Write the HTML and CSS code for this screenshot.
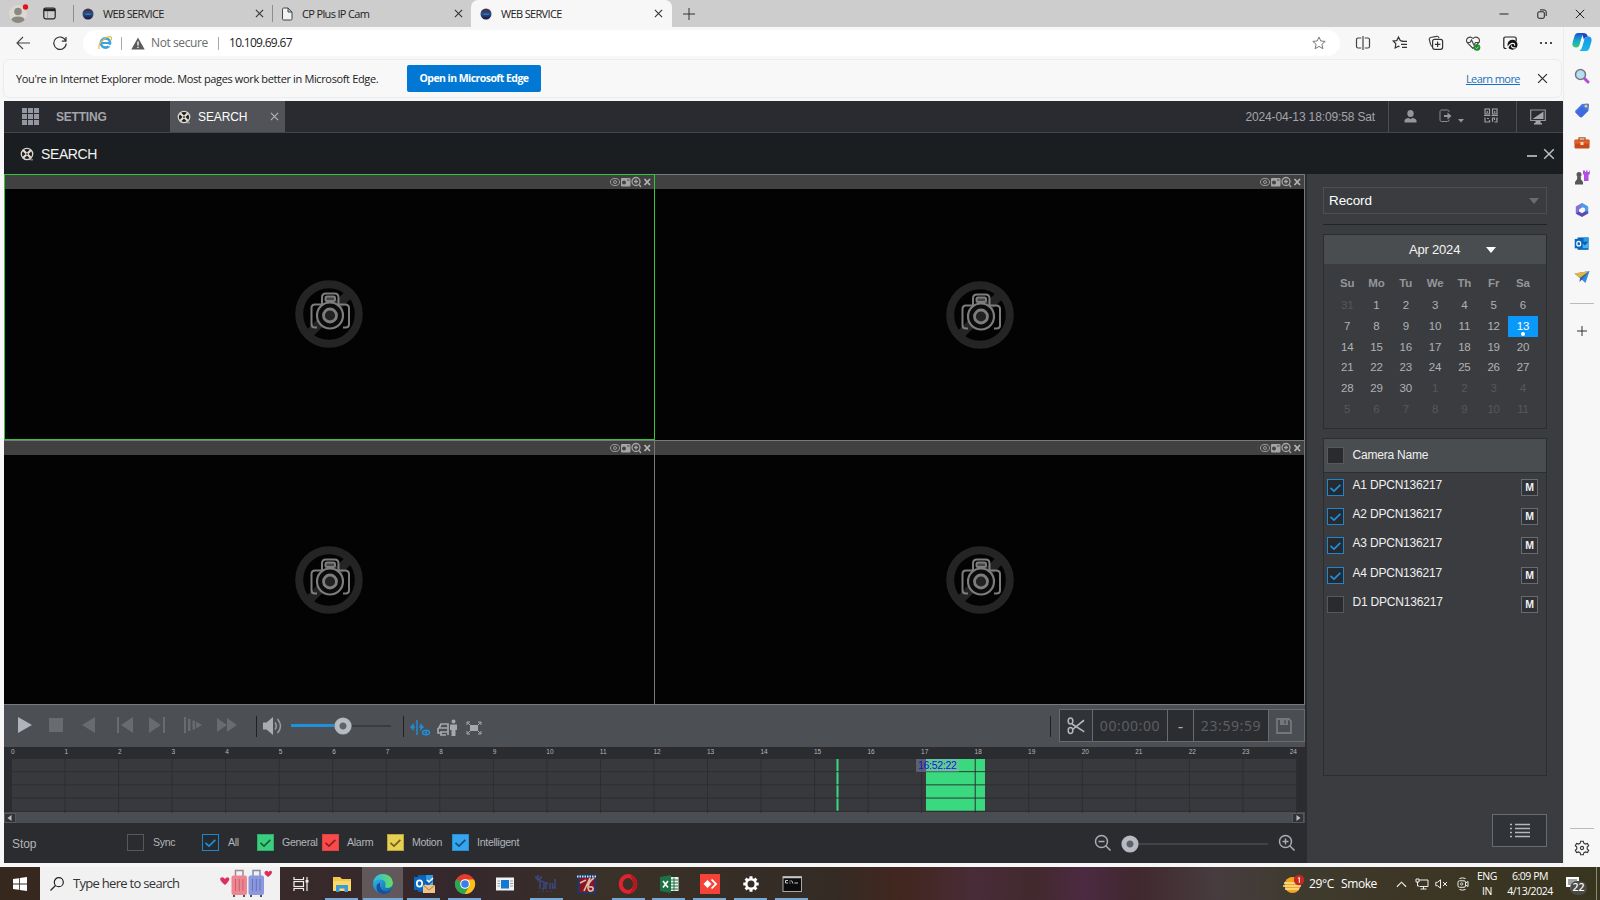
FILE: index.html
```html
<!DOCTYPE html>
<html lang="en">
<head>
<meta charset="utf-8">
<title>WEB SERVICE</title>
<link rel="stylesheet" href="styles.css">
</head>
<body>
<svg class="defs" width="0" height="0" aria-hidden="true">
  <defs>
    <linearGradient id="gFav" x1="0" y1="0" x2="0" y2="1"><stop offset="0" stop-color="#4a2a38"/><stop offset=".5" stop-color="#24508c"/><stop offset="1" stop-color="#1a1238"/></linearGradient>
    <linearGradient id="gEdge" x1="0" y1="0" x2="1" y2="1"><stop offset="0" stop-color="#35c1f1"/><stop offset="1" stop-color="#0c59a4"/></linearGradient>
    <linearGradient id="gEdge2" x1="0" y1="0" x2="1" y2="0"><stop offset="0" stop-color="#2bb9e8"/><stop offset="1" stop-color="#6bdc5b"/></linearGradient>
    <linearGradient id="gCop1" x1="0" y1="0" x2="0" y2="1"><stop offset="0" stop-color="#1b4fd0"/><stop offset=".5" stop-color="#13a9c9"/><stop offset="1" stop-color="#39c978"/></linearGradient>
    <linearGradient id="gCop2" x1="0" y1="0" x2="0" y2="1"><stop offset="0" stop-color="#1597e5"/><stop offset="1" stop-color="#18b6ea"/></linearGradient>
    <radialGradient id="gKnob"><stop offset="0" stop-color="#5f646c"/><stop offset=".36" stop-color="#5f646c"/><stop offset=".46" stop-color="#b9bdc4"/><stop offset="1" stop-color="#b4b8be"/></radialGradient>
    <symbol id="fav" viewBox="0 0 12 12"><circle cx="6" cy="6" r="5.500" fill="url(#gFav)"/><path d="M2 6Q6 4.800 10 6Q6 8 2 6Z" fill="#3f78b8"/></symbol>
    <symbol id="x" viewBox="0 0 10 10"><path d="M1 1L9 9M9 1L1 9" fill="none" stroke="currentColor" stroke-width="1.200"/></symbol>
    <symbol id="reel" viewBox="0 0 14 14"><circle cx="7" cy="7" r="5.700" fill="#1d1b1c" stroke="#dad6d0" stroke-width="1.300"/><path d="M3.200 3.200L10.800 10.800M10.800 3.200L3.200 10.800" stroke="#e0dcd4" stroke-width="2.200"/><circle cx="7" cy="7" r="1" fill="#4a4340"/><path d="M10 12.800h3" stroke="#a9a59f"/></symbol>
    <symbol id="tools" viewBox="0 0 42 12"><g fill="none" stroke="#9b9b9b"><ellipse cx="5" cy="6" rx="4.500" ry="3.500"/><circle cx="5" cy="6" r="1.500"/></g><rect x="11" y="2" width="9.500" height="8.500" rx="1" fill="#a5a5a5"/><circle cx="14" cy="6.500" r="2" fill="#444"/><path d="M17 4h2.500" stroke="#444"/><g fill="none" stroke="#a5a5a5" stroke-width="1.300"><circle cx="26" cy="5.500" r="4"/><path d="M24 5.500h4M26 3.500v4M29 8.500L31 11"/></g><path d="M34.500 3L40 9M40 3L34.500 9" stroke="#b5b5b5" stroke-width="1.700"/></symbol>
    <symbol id="nocam" viewBox="0 0 68 68"><circle cx="34" cy="34" r="29.800" fill="none" stroke="#242424" stroke-width="8"/><path d="M14 54L54 14" stroke="#242424" stroke-width="9"/><g fill="none" stroke="#7d7d7d" stroke-width="2"><path d="M22 47.500H20Q16.500 47.500 16.500 44.500V28Q16.500 24.500 20 24.500H27V17.500Q27 13.500 31 13.500H39.500Q43.500 13.500 43.500 17.500V24.500H50Q54 24.500 54 28V44.500Q54 47.500 50.500 47.500H48"/><circle cx="35" cy="35.500" r="13" fill="#0b0b0b" stroke-width="2.200"/><circle cx="35" cy="35.500" r="6.500" fill="#222" stroke-width="2.800"/><rect x="30.500" y="16.500" width="9.500" height="4.500" rx="1.500" fill="#444"/></g></symbol>
    <symbol id="tick" viewBox="0 0 17 17"><path d="M2.800 8.800L6.800 12.500L14 5.500" fill="none" stroke="currentColor" stroke-width="1.900"/></symbol>
    <symbol id="knob" viewBox="0 0 18 18"><circle cx="9" cy="9" r="8.600" fill="url(#gKnob)"/></symbol>
    <symbol id="ofav" viewBox="0 0 22 22"><rect x="5" y="2" width="15" height="17" fill="#0a5fb4"/><path d="M9 8L15 13L20 8V17H9Z" fill="#45b3f0"/><path d="M13 2H20V8H13Z" fill="#2b9ae6"/><rect x="1" y="4" width="11" height="13" fill="#0869c2"/><ellipse cx="6.500" cy="10.500" rx="2.700" ry="3.200" fill="none" stroke="#fff" stroke-width="1.700"/></symbol>
  </defs>
</svg>

<div class="tabbar">
  <svg class="avatar" viewBox="0 0 20 20"><circle cx="9" cy="10" r="9" fill="#dbd8d3"/><circle cx="9" cy="7.500" r="3.800" fill="#8b8884"/><path d="M2.500 16Q2.500 12.500 9 12.500T15.500 16Q13 19 9 19T2.500 16Z" fill="#8b8884"/><circle cx="16.500" cy="3" r="2.700" fill="#e3131b"/></svg>
  <svg class="tabact" viewBox="0 0 13 13"><rect x=".8" y="1" width="11.400" height="10.800" rx="1.800" fill="none" stroke="#222" stroke-width="1.200"/><path d="M1 1.500h11v2.700H1z" fill="#222"/><path d="M4.500 4v7.500" stroke="#777" stroke-width=".6"/></svg>
  <div class="tab t1"><svg class="fi"><use href="#fav"/></svg><span class="tw">WEB SERVICE</span><svg class="cx"><use href="#x"/></svg></div>
  <div class="tab t2"><svg class="fi doc" viewBox="0 0 12 14"><path d="M1.500 2.200Q1.500 1 2.700 1H7L11 5V11.800Q11 13 9.800 13H2.700Q1.500 13 1.500 11.800ZM7 1V5H11" fill="#f2f2f2" stroke="#444"/></svg><span class="tw2">CP Plus IP Cam</span><svg class="cx"><use href="#x"/></svg></div>
  <div class="tab t3"><svg class="fi"><use href="#fav"/></svg><span class="tw">WEB SERVICE</span><svg class="cx"><use href="#x"/></svg></div>
  <svg class="plus" viewBox="0 0 12 12"><path d="M6 0V12M0 6H12" stroke="#333"/></svg>
  <div class="winbtns">
    <svg viewBox="0 0 10 10"><path d="M.5 5h9" stroke="#222"/></svg>
    <svg viewBox="0 0 10 10"><path d="M3 .9H7Q9.200 .9 9.200 3V7" fill="none" stroke="#222"/><rect x=".8" y="2.800" width="6.500" height="6.500" rx="1.200" fill="none" stroke="#222"/></svg>
    <svg viewBox="0 0 10 10"><path d="M.8 .8L9.200 9.200M9.200 .8L.8 9.200" stroke="#222"/></svg>
  </div>
</div>

<div class="edge">
  <div class="edgemain">
    <div class="toolbar">
      <svg class="back" viewBox="0 0 14 14"><path d="M14 7H1M7 1L1 7L7 13" fill="none" stroke="#444" stroke-width="1.100"/></svg>
      <svg class="reload" viewBox="0 0 14 14"><path d="M12.800 5A6.200 6.200 0 1 0 13.200 7.500M13 1V5.200H8.800" fill="none" stroke="#333" stroke-width="1.200"/></svg>
      <div class="addr">
        <svg class="ie" viewBox="0 0 14 14"><circle cx="7.500" cy="7" r="4.600" fill="none" stroke="#38a3e0" stroke-width="2.600"/><path d="M3.500 7H12.500" stroke="#38a3e0" stroke-width="2"/><path d="M10 9.500H14" stroke="#fff" stroke-width="1.500"/><path d="M1.200 13Q-.5 9 5 4T13.500 1.500Q14 3 12.500 4.500" fill="none" stroke="#e8bd3e" stroke-width="1.200"/></svg>
        <i class="sep s1"></i>
        <svg class="warn" viewBox="0 0 14 13"><path d="M7 .5L13.700 12.500H.3Z" fill="#5c5c5c"/><path d="M7 4.500V8.500M7 9.700V11" stroke="#fff" stroke-width="1.300"/></svg>
        <span class="nsec">Not secure</span>
        <i class="sep s2"></i>
        <span class="url">10.109.69.67</span>
        <svg class="star" viewBox="0 0 14 14"><path d="M7 1L8.800 5L13.200 5.400L9.900 8.300L10.900 12.700L7 10.400L3.100 12.700L4.100 8.300L.8 5.400L5.200 5Z" fill="none" stroke="#777"/></svg>
      </div>
      <div class="tbicons">
        <svg viewBox="0 0 16 16"><path d="M6.300 3H3.200Q1.500 3 1.500 4.500V11.500Q1.500 13 3.200 13H6.300M9.700 3H12.800Q14.500 3 14.500 4.500V11.500Q14.500 13 12.800 13H9.700M8 1V15" fill="none" stroke="#444" stroke-width="1.200"/></svg>
        <svg viewBox="0 0 16 16"><path d="M10.500 5.800L8.300 5.600L6.500 2L4.800 5.600L1.200 6L3.800 8.800L3.200 13L6.500 11.200L7.500 11.800M9.500 6.300H15M9 9.300H15M10 12.300H15" fill="none" stroke="#333" stroke-width="1.200"/></svg>
        <svg viewBox="0 0 16 16"><path d="M4 11.500Q2.800 10.500 2.500 9L1.300 4.500Q1 3 2.500 2.500L8.500 1.300Q10.500 1 11 3" fill="none" stroke="#444" stroke-width="1.200"/><rect x="4.600" y="4.300" width="10" height="10" rx="2" fill="none" stroke="#333" stroke-width="1.200"/><path d="M9.600 6.500V12M6.900 9.300H12.400" stroke="#333" stroke-width="1.200"/></svg>
        <svg viewBox="0 0 16 16"><path d="M8 13.500L2.500 8Q.5 5.500 2.500 3.200Q5.500 .8 8 3.500Q10.500 .8 13.500 3.200Q15.500 5.500 13.500 8ZM1.500 7.500H5L6.500 5L9 10L10.500 7.500H14.500" fill="none" stroke="#444" stroke-width="1.100"/><circle cx="12" cy="12.500" r="3.300" fill="#1d8a2c"/><path d="M10.500 12.500L11.700 13.700L13.700 11.500" fill="none" stroke="#d8f0d8" stroke-width=".8"/></svg>
        <svg viewBox="0 0 16 16"><path d="M4.500 13.500H3.500Q1.800 13.500 1.800 11.800V3.700Q1.800 2 3.500 2H12.500Q14.200 2 14.200 3.700V6" fill="none" stroke="#222" stroke-width="1.200"/><circle cx="10.500" cy="9.800" r="5" fill="#111"/><path d="M6 12.500Q8 7.500 12 8.500Q13.200 9.500 12.500 10.800M9.500 10.500Q9 13.200 14 13" fill="none" stroke="#f7f7f7" stroke-width="1.100"/></svg>
        <svg viewBox="0 0 16 16"><g fill="#222"><circle cx="3" cy="8" r="1.100"/><circle cx="8" cy="8" r="1.100"/><circle cx="13" cy="8" r="1.100"/></g></svg>
      </div>
    </div>
    <div class="infobar">
      <span class="imsg">You're in Internet Explorer mode. Most pages work better in Microsoft Edge.</span>
      <span class="obtn"><b>Open in Microsoft Edge</b></span>
      <span class="learn">Learn more</span>
      <svg class="ix"><use href="#x"/></svg>
    </div>

    <div class="app">
      <div class="nav">
        <svg class="gridi" viewBox="0 0 17 17"><path d="M0 0h5v5H0zM6 0h5v5H6zM12 0h5v5h-5zM0 6h5v5H0zM6 6h5v5H6zM12 6h5v5h-5zM0 12h5v5H0zM6 12h5v5H6zM12 12h5v5h-5z" fill="#9496a0"/></svg>
        <b class="setting">SETTING</b>
        <div class="navtab"><svg class="reel"><use href="#reel"/></svg><span>SEARCH</span><svg class="nx"><use href="#x"/></svg></div>
        <span class="date">2024-04-13 18:09:58 Sat</span>
        <div class="navicons">
          <svg class="person" viewBox="0 0 13 13"><ellipse cx="6.500" cy="3.500" rx="3.200" ry="3.500" fill="#94969c"/><path d="M.5 12.500V10.500Q1 8.500 4.500 8L6.500 9L8.500 8Q12 8.500 12.500 10.500V12.500Z" fill="#94969c"/></svg>
          <svg class="exit" viewBox="0 0 26 14"><path d="M10 3V2.500Q10 1 8.500 1H2.500Q1 1 1 2.500V11Q1 12.500 2.500 12.500H8.500Q10 12.500 10 11V10.500" fill="none" stroke="#8a8c92"/><path d="M5 6H8.500V3.500L12.500 7L8.500 10.500V8H5Z" fill="#94969c"/><path d="M19 10H25L22 13.500Z" fill="#94969c"/></svg>
          <svg class="qr" viewBox="0 0 14 15"><g fill="none" stroke="#9a9ca2" stroke-width="1.200"><rect x="1" y="1" width="4.500" height="5"/><rect x="8.500" y="1" width="4.500" height="5"/><path d="M3.200 3v2M10.700 3v2M0 7.500H6.500M7.500 7.500H14M1 9.500V14H5.500V12M3 10.500H5M8.500 14V10H10.500V12M13 9.500V14H10.500M12 11H13"/></g></svg>
        </div>
        <svg class="mon" viewBox="0 0 16 16"><path d="M.7 1H15.300V11.500H.7Z" fill="none" stroke="#94969c" stroke-width="1.200"/><path d="M13.500 2.500V10H2.500ZM5.500 12H10.500V14H12V15.500H4V14H5.500Z" fill="#a3a5aa"/></svg>
      </div>
      <div class="title"><svg class="reel"><use href="#reel"/></svg><span>SEARCH</span><i class="mini"></i><svg class="tx"><use href="#x"/></svg></div>

      <div class="body">
        <div class="left">
          <div class="videos">
            <div class="cell sel"><div class="chead"><svg><use href="#tools"/></svg></div><div class="cbody"><svg><use href="#nocam"/></svg></div></div>
            <div class="cell"><div class="chead"><svg><use href="#tools"/></svg></div><div class="cbody"><svg><use href="#nocam"/></svg></div></div>
            <div class="cell"><div class="chead"><svg><use href="#tools"/></svg></div><div class="cbody"><svg><use href="#nocam"/></svg></div></div>
            <div class="cell"><div class="chead"><svg><use href="#tools"/></svg></div><div class="cbody"><svg><use href="#nocam"/></svg></div></div>
          </div>
          <div class="controls">
            <svg class="play" viewBox="0 0 226 20"><path d="M4 2V18L18 10Z" fill="#b0b3b9"/><g fill="#686b70"><path d="M35 3h14v14H35zM81 2V18L68 10ZM103 2h2V18h-2zM119 2V18L107 10ZM135 2V18L147 10ZM149 2h2V18h-2zM170 2h2V18h-2zM174 4h2.500V16H174zM178.500 5.500h2.500V14.500h-2.500zM182 6.500L188 10L182 13.500ZM203 3V17L213 10ZM213 3V17L223 10Z"/></g></svg>
            <i class="vsep"></i>
            <svg class="spk" viewBox="0 0 22 20"><path d="M1 6.500H4.500L11 1V19L4.500 13.500H1Z" fill="#a9acb1"/><path d="M13 6.500Q15.500 10 13 13.500M15.500 3Q21.500 10 15.500 17" fill="none" stroke="#9a9da2" stroke-width="1.500"/></svg>
            <div class="vol"><i class="fill"></i><svg class="knob"><use href="#knob"/></svg><i class="rest"></i></div>
            <i class="vsep"></i>
            <svg class="trio" viewBox="0 0 74 18"><g fill="none" stroke="#1f90dc" stroke-width="1.400"><path d="M7 1V16M1 8H5M9 8H13M4 5L1 8L4 11M10 5L13 8L10 11"/><ellipse cx="16" cy="13.500" rx="3.500" ry="2.300" fill="#4c4f53"/></g><circle cx="16" cy="13.500" r="1.200" fill="#1f90dc"/><path d="M29 9L31 5H38V16M28 9H37M30 13H37M28 9V14H31V16H36" fill="none" stroke="#a5a8ad" stroke-width="1.700"/><circle cx="43.500" cy="2.500" r="2" fill="#a5a8ad"/><path d="M40 5.500H47V11H45.500V17H41.500V11H40Z" fill="#a5a8ad"/><path d="M57 6V3H60M68 3H71V6M57 12V15H60M68 15H71V12M57 3L60 6M71 3L68 6M57 15L60 12M71 15L68 12" fill="none" stroke="#a5a8ad"/><rect x="60" y="6" width="8" height="6" fill="#a5a8ad"/></svg>
            <i class="vsep far"></i>
            <div class="clip">
              <div class="cl sc"><svg viewBox="0 0 18 18"><g fill="none" stroke="#b4b7bc" stroke-width="1.500"><ellipse cx="3.500" cy="4" rx="2.300" ry="3"/><ellipse cx="3.500" cy="13.500" rx="2.300" ry="3"/></g><path d="M5 6L17.500 14L17 15.500L5 8ZM5 12L16.500 2.500L17.500 4L6 13Z" fill="#b4b7bc"/></svg></div>
              <div class="cl tm">00:00:00</div><div class="cl ds">-</div><div class="cl tm">23:59:59</div>
              <div class="cl sv"><svg viewBox="0 0 16 16"><path d="M1 1H13L15 3V15H1Z" fill="none" stroke="#74777c" stroke-width="1.800"/><path d="M4 1H12V7H4Z" fill="#74777c"/><path d="M9 2.200v3.500" stroke="#4c4f53" stroke-width="1.500"/></svg></div>
            </div>
          </div>
          <div class="timeline">
            <div class="ruler"><span>0</span><span>1</span><span>2</span><span>3</span><span>4</span><span>5</span><span>6</span><span>7</span><span>8</span><span>9</span><span>10</span><span>11</span><span>12</span><span>13</span><span>14</span><span>15</span><span>16</span><span>17</span><span>18</span><span>19</span><span>20</span><span>21</span><span>22</span><span>23</span><span class="last">24</span></div>
            <svg class="track" viewBox="0 0 1285 54"><defs><pattern id="tg" width="53.540" height="13.170" patternUnits="userSpaceOnUse"><path d="M53 0V13.170M0 12.700H53.540" stroke="#2a2c2f" stroke-width="1"/></pattern></defs><rect width="1285" height="53" fill="#37393d"/><path d="M824.500 0h2v52h-2zM914 0h59v52h-59z" fill="#3bd97f"/><rect width="1285" height="54" fill="url(#tg)"/></svg>
            <span class="stamp">16:52:22</span>
          </div>
          <div class="scroll"><svg viewBox="0 0 12 10"><rect x=".5" y=".5" width="11" height="9" fill="#303338" stroke="#55585c"/><path d="M7.500 2V8L3.500 5Z" fill="#b9bcc0"/></svg><svg class="rt" viewBox="0 0 12 10"><rect x=".5" y=".5" width="11" height="9" fill="#303338" stroke="#55585c"/><path d="M4.500 2V8L8.500 5Z" fill="#b9bcc0"/></svg></div>
          <div class="legend">
            <span class="stop">Stop</span>
            <div class="lg sy"><i class="cb off"></i><span>Sync</span></div>
            <div class="lg al"><svg class="cb blue"><use href="#tick"/></svg><span>All</span></div>
            <div class="lg"><svg class="cb green"><use href="#tick"/></svg><span>General</span></div>
            <div class="lg"><svg class="cb red"><use href="#tick"/></svg><span>Alarm</span></div>
            <div class="lg"><svg class="cb yel"><use href="#tick"/></svg><span>Motion</span></div>
            <div class="lg"><svg class="cb sky"><use href="#tick"/></svg><span>Intelligent</span></div>
            <div class="zoomer">
              <svg class="zi" viewBox="0 0 18 18"><g fill="none" stroke="#a9acb1" stroke-width="1.500"><circle cx="7.500" cy="7.500" r="6"/><path d="M4.500 7.500H10.500M12 12L16.500 16.500"/></g></svg>
              <svg class="knob"><use href="#knob"/></svg><i class="zl"></i>
              <svg class="zi" viewBox="0 0 18 18"><g fill="none" stroke="#a9acb1" stroke-width="1.500"><circle cx="7.500" cy="7.500" r="6"/><path d="M4.500 7.500H10.500M7.500 4.500V10.500M12 12L16.500 16.500"/></g></svg>
            </div>
          </div>
        </div>
        <div class="side">
          <div class="record"><span>Record</span><svg viewBox="0 0 10 6"><path d="M0 0H10L5 6Z" fill="#686b70"/></svg></div>
          <i class="rule"></i>
          <div class="cal">
            <div class="calhead"><span>Apr 2024</span><svg viewBox="0 0 10 6"><path d="M0 0H10L5 6Z" fill="#fff"/></svg></div>
            <div class="days">
              <b>Su</b><b>Mo</b><b>Tu</b><b>We</b><b>Th</b><b>Fr</b><b>Sa</b>
              <i>31</i><span>1</span><span>2</span><span>3</span><span>4</span><span>5</span><span>6</span>
              <span>7</span><span>8</span><span>9</span><span>10</span><span>11</span><span>12</span><span class="today">13</span>
              <span>14</span><span>15</span><span>16</span><span>17</span><span>18</span><span>19</span><span>20</span>
              <span>21</span><span>22</span><span>23</span><span>24</span><span>25</span><span>26</span><span>27</span>
              <span>28</span><span>29</span><span>30</span><i>1</i><i>2</i><i>3</i><i>4</i>
              <i>5</i><i>6</i><i>7</i><i>8</i><i>9</i><i>10</i><i>11</i>
            </div>
          </div>
          <div class="cams">
            <div class="camhead"><i class="cb dark"></i><span>Camera Name</span></div>
            <div class="cam"><svg class="cb blue"><use href="#tick"/></svg><span>A1 DPCN136217</span><b>M</b></div>
            <div class="cam"><svg class="cb blue"><use href="#tick"/></svg><span>A2 DPCN136217</span><b>M</b></div>
            <div class="cam"><svg class="cb blue"><use href="#tick"/></svg><span>A3 DPCN136217</span><b>M</b></div>
            <div class="cam"><svg class="cb blue"><use href="#tick"/></svg><span>A4 DPCN136217</span><b>M</b></div>
            <div class="cam"><i class="cb dark"></i><span>D1 DPCN136217</span><b>M</b></div>
          </div>
          <div class="listbtn"><svg viewBox="0 0 20 16"><path d="M0 1.500H2M0 5.500H2M0 9.500H2M0 13.500H2M5 1.500H20M5 5.500H20M5 9.500H20M5 13.500H20" stroke="#b4b7bb" stroke-width="1.300"/></svg></div>
        </div>
      </div>
    </div>
  </div>

  <div class="sidebar">
    <svg class="cop" viewBox="0 0 20 20"><path d="M6 1H12.500Q10.500 2 9.500 6L7.500 13Q6.500 16 3.500 15.500Q-.5 15 .7 10L2.500 4Q3.500 1 6 1Z" fill="url(#gCop1)"/><path d="M14 19H7.500Q9.500 18 10.500 14L12.500 7Q13.500 4.500 16.500 4.500Q20.500 5 19.300 10L17.500 16Q16.500 19 14 19Z" fill="url(#gCop2)"/><path d="M10 1.200H13Q15 1.500 16 4.800Q13 4.500 12 8Z" fill="#1c45c8"/></svg>
    <svg viewBox="0 0 16 16"><path d="M10 10L14 14" stroke="#b44be0" stroke-width="3" stroke-linecap="round"/><circle cx="6.500" cy="6.500" r="5" fill="#b9dcf3" stroke="#75797f" stroke-width="1.500"/></svg>
    <svg viewBox="0 0 16 16"><path d="M8 2L14 1.500Q15 1.500 15 3L14.500 8.500L8 15Q7 15.500 6 15L1.500 10.500Q.8 9.500 1.500 8.500Z" fill="#4b79e8"/><path d="M1.500 10.500L8 4L14 9L8 15Q7 15.500 6 15Z" fill="#416ade"/><circle cx="12" cy="4.200" r="1.400" fill="#f3d24d"/></svg>
    <svg viewBox="0 0 16 16"><path d="M5 5V2.800H11V5" fill="none" stroke="#a65b2a" stroke-width="1.300"/><rect x=".5" y="4.500" width="15" height="9" rx="1" fill="#c64a1c"/><path d="M.5 5.500h15V8.500H.5z" fill="#e0632a"/><rect x="6.500" y="7" width="3" height="3" fill="#f4d7c0"/></svg>
    <svg viewBox="0 0 16 16"><path d="M9 1.500H11V3H12V1.500H13.500V3H15V1.500H15.800V5L14.500 6V12H10V6L9 5Z" fill="#b050e0"/><circle cx="5" cy="5.500" r="2.500" fill="#55575a"/><path d="M3 7.500H7L6.800 10L9 13V15.500H1V13L3.200 10Z" fill="#55575a"/></svg>
    <svg viewBox="0 0 16 16"><path d="M8 1L1.800 4.500V11.500L5 13.500V7.500L8 5.500L13 4Z" fill="#8a6ddc"/><path d="M8 1L14.200 4.500V11L11 9.500V6.500L8 4.800L5 6.500Z" fill="#4a9fe6"/><path d="M1.800 11.500L8 15L14.200 11.500V9.500L11 9.200L8 11.200L5 9.500Z" fill="#5b4bb5"/></svg>
    <svg viewBox="0 0 22 22"><use href="#ofav"/></svg>
    <svg viewBox="0 0 16 16"><path d="M.5 4.500L15.500 2L11.500 14L7.500 10.500Z" fill="#2f8de0"/><path d="M.5 4.500L15.500 2L6 9Z" fill="#e7b23c"/><path d="M6 9L15.500 2L8 10.500L5.500 13Z" fill="#3a5d9c"/></svg>
    <i class="hr"></i>
    <svg class="sp" viewBox="0 0 10 10"><path d="M5 0V10M0 5H10" stroke="#333"/></svg>
    <i class="hr low"></i>
    <svg class="sg" viewBox="0 0 16 16"><path d="M6.700 1.200h2.600l.5 2 1.600.9 2-.7 1.300 2.300-1.500 1.400v1.800l1.500 1.400-1.300 2.300-2-.7-1.600.9-.5 2H6.700l-.5-2-1.600-.9-2 .7-1.300-2.300 1.500-1.400V7.100L1.300 5.700l1.300-2.300 2 .7 1.600-.9Z" fill="none" stroke="#333" stroke-width="1.100"/><circle cx="8" cy="8" r="1.600" fill="none" stroke="#333" stroke-width="1.100"/></svg>
  </div>
</div>

<div class="taskbar">
  <div class="start"><svg viewBox="0 0 14 14"><path d="M0 2L6 1.200V6.600H0ZM6.800 1.100L14 0V6.600H6.800ZM0 7.400H6V12.800L0 12ZM6.800 7.400H14V14L6.800 12.900Z" fill="#fff"/></svg></div>
  <div class="search">
    <svg class="mag" viewBox="0 0 14 14"><circle cx="8.800" cy="5.200" r="4.500" fill="none" stroke="#222" stroke-width="1.200"/><path d="M5.500 8.500L.5 13.500" stroke="#222" stroke-width="1.200"/></svg>
    <span>Type here to search</span>
    <svg class="bags" viewBox="0 0 52 29"><path d="M5 16Q-1 11 .5 9Q3 7 5 10Q7 7 9 9Q10.500 11 5 16Z" fill="#dc2f5f"/><path d="M48 8Q43 4.500 45 2.500Q47 1 48.500 3Q51 .5 52 3Q52 5.500 48 8Z" fill="#dc2f5f"/><g fill="none" stroke="#a1898f" stroke-width="1.500"><path d="M15.500 8V1.500H23V8"/><path d="M33 8V1.500H40V8" stroke="#858bb0"/></g><rect x="11.500" y="6.500" width="15.500" height="19.500" rx="2" fill="#ec8792"/><rect x="28.500" y="6.500" width="15.500" height="19.500" rx="2" fill="#8b98dd"/><path d="M15.500 10V22M19.300 10V22M23 10V22" stroke="#c9606f"/><path d="M32.500 10V22M36.300 10V22M40 10V22" stroke="#6674bd"/><path d="M13 26v2h2v-2zM23 26v2h2v-2zM30 26v2h2v-2zM40 26v2h2v-2z" fill="#555"/></svg>
  </div>
  <div class="apps">
    <div class="ap"><svg viewBox="0 0 22 22"><path d="M4 4V6.500H13.500V4M4 18V15.500H13.500V18M17 4V18" fill="none" stroke="#eee" stroke-width="1.200"/><rect x="4" y="8.500" width="9.500" height="5" fill="none" stroke="#eee" stroke-width="1.200"/><rect x="15.500" y="7" width="3" height="2.500" fill="#eee"/></svg></div>
    <div class="ap on"><svg viewBox="0 0 22 22"><path d="M2 4H9L11 6H20V18H2Z" fill="#f3c64f"/><path d="M2 8H20V18H2Z" fill="#fbd968"/><path d="M5 12H17V19H13.500V15.500H8.500V19H5Z" fill="#3d9ad9"/></svg></div>
    <div class="ap on cur"><svg viewBox="0 0 22 22"><circle cx="11" cy="11" r="10" fill="url(#gEdge)"/><path d="M1.200 9Q3 1 11 1Q20 1.500 21 10Q20.500 15 15 15Q12 14.500 13.500 12Q14 7 8.500 6.500Q3.500 6.500 1.200 9Z" fill="url(#gEdge2)"/><path d="M8 10Q7 17 14 18.500Q17 18.500 19.500 16.500Q17 21 11 21Q4.500 20 4.500 14Q4.500 10.500 8 10Z" fill="#1a4f9c"/></svg></div>
    <div class="ap on"><svg viewBox="0 0 22 22"><use href="#ofav"/><path d="M10 12H22V20H10Z" fill="#f0c489"/><path d="M10 12L16 17L22 12" fill="none" stroke="#b57b3c"/><path d="M14 7L16 9L20 5" fill="none" stroke="#fff" stroke-width="1.500"/></svg></div>
    <div class="ap on"><svg viewBox="0 0 22 22"><circle cx="11" cy="11" r="10" fill="#e33b2e"/><path d="M11 11L2.300 6A10 10 0 0 0 11 21L15.500 13.500Z" fill="#30a552"/><path d="M11 6.500H20A10 10 0 0 1 10.500 21L15.300 13.500Z" fill="#fbc116"/><circle cx="11" cy="11" r="4.800" fill="#fff"/><circle cx="11" cy="11" r="3.800" fill="#3b7ded"/></svg></div>
    <div class="ap"><svg viewBox="0 0 22 22"><rect x="2" y="4.500" width="18" height="13" fill="#f2f2f2"/><rect x="7" y="7" width="8" height="8.500" fill="#1479d0"/><path d="M3.500 8H6M3.500 10.500H6M3.500 13H6M16 8h3M16 10.500h3M16 13h3" stroke="#999"/></svg></div>
    <div class="ap on"><svg viewBox="0 0 22 22"><g fill="none" stroke="#3a4781" stroke-width="1.500"><path d="M3 2V6L5 7.500V16M1 3V5L3 7L6 5V3M9 16V9L6 8M9 16H7M11 9V16M11 11L13 10M15 10V16M17.500 10V16M17.500 14H20M20 6V16"/></g><path d="M3 18.500H19" stroke="#3a4781" stroke-width=".7" stroke-dasharray="2"/></svg></div>
    <div class="ap"><svg viewBox="0 0 22 22"><rect x="1.500" y="1.500" width="19" height="19" fill="#173a72"/><rect x="3.500" y="5" width="15" height="14" fill="#8c1420"/><path d="M1 3.500H21" stroke="#d9dfe8" stroke-width="2" stroke-dasharray="1.500 1"/><path d="M8 18L14 5M18 5Q12 9 12 15Q13 20 17 17Q18 13 13 14M4 10L10 7" fill="none" stroke="#d9b8a8" stroke-width="1.700"/></svg></div>
    <div class="ap on"><svg viewBox="0 0 22 22"><ellipse cx="11" cy="11" rx="7.300" ry="8" fill="none" stroke="#e2232f" stroke-width="4"/><path d="M13 2Q20 4 20 11T13 20Q16 16 16 11T13 2Z" fill="#b31820"/></svg></div>
    <div class="ap on"><svg viewBox="0 0 22 22"><rect x="11" y="4" width="9.500" height="14" fill="#e9f3ec"/><path d="M12 7h8M12 10h8M12 13h8M12 16h8M16 4.500V17.500" stroke="#1e7145"/><path d="M2 4L13 2V20L2 18Z" fill="#1e7145"/><path d="M5 8L10 14.500M10 8L5 14.500" stroke="#fff" stroke-width="1.600"/></svg></div>
    <div class="ap on"><svg viewBox="0 0 22 22"><rect x="1" y="1" width="20" height="20" fill="#f5433a"/><path d="M4.500 11L8.500 7L12.500 11L8.500 15ZM11.800 7L15.800 11L11.800 15L13.300 16L18.300 11L13.300 6Z" fill="#fff"/></svg></div>
    <div class="ap on"><svg viewBox="0 0 22 22"><circle cx="11" cy="11" r="4.700" fill="none" stroke="#fff" stroke-width="2.400"/><g stroke="#fff" stroke-width="3"><path d="M11 3.300V6M11 16V18.700M3.300 11H6M16 11H18.700M5.600 5.600L7.500 7.500M14.500 14.500L16.400 16.400M5.600 16.400L7.500 14.500M14.500 7.500L16.400 5.600"/></g></svg></div>
    <div class="ap on"><svg viewBox="0 0 22 22"><rect x="2" y="3.500" width="18.500" height="15" fill="#0c0c0c" stroke="#a8a8a8"/><path d="M2 4.500H20" stroke="#c9c9c9" stroke-width="1.500"/><path d="M7 7.500H4.500V10H7M9 7.500V8.500M9 9.500V10.500M10.500 7.500L12 10.500M13.500 10H17" fill="none" stroke="#ddd" stroke-width=".9"/></svg></div>
  </div>
  <div class="tray">
    <svg class="wx" viewBox="0 0 22 20"><circle cx="9.500" cy="11" r="8" fill="#f2a51f"/><path d="M1 9H13M0 12H18M2 15H16" stroke="#fbe3a0" stroke-width="1.300"/><circle cx="16" cy="6" r="5.200" fill="#c6281f"/><path d="M14.800 4.500L16.300 3.500V8.800" fill="none" stroke="#fff"/></svg>
    <span class="temp">29°C</span><span class="smoke">Smoke</span>
    <svg class="chev" viewBox="0 0 12 8"><path d="M1 7L6 2L11 7" fill="none" stroke="#eee" stroke-width="1.200"/></svg>
    <svg class="net" viewBox="0 0 14 12"><path d="M4 2H13V8.500H4.500M8.500 8.500V11M5.500 11H11.500M1 1H4V4H1ZM2.500 4V8H4" fill="none" stroke="#eee"/></svg>
    <svg class="mute" viewBox="0 0 13 10"><path d="M.8 3.300H2.500L5.500 .8V9.200L2.500 6.700H.8ZM8 3L12 7M12 3L8 7" fill="none" stroke="#eee"/></svg>
    <svg class="meet" viewBox="0 0 12 14"><path d="M2.500 1.500Q5.500 .3 8.500 1.500M2.500 12.500Q5.500 13.700 8.500 12.500M8.500 6L11 4.500V9.500L8.500 8" fill="none" stroke="#eee"/><rect x="1" y="3.800" width="7.500" height="6.500" rx="1.500" fill="none" stroke="#eee"/><circle cx="4.700" cy="7" r="1.200" fill="none" stroke="#eee" stroke-width=".8"/></svg>
    <div class="two lang"><span>ENG</span><span>IN</span></div>
    <div class="two clock"><span>6:09 PM</span><span>4/13/2024</span></div>
    <div class="notif"><svg viewBox="0 0 14 14"><path d="M0 0H13V10H6L4 13V10H0Z" fill="#fff"/><path d="M2 3H11M2 5H11M2 7H8" stroke="#444"/></svg><span>22</span></div>
    <i class="peek"></i>
  </div>
</div>
</body>
</html>
```
FILE: styles.css
```css
* { box-sizing: border-box; }
html, body { margin: 0; padding: 0; }
body { width: 1600px; height: 900px; overflow: hidden; background: #f7f7f7; font-family: "Open Sans", "Noto Sans", sans-serif; display: flex; flex-direction: column; }
svg { display: block; flex: none; }
i { font-style: normal; display: block; flex: none; }
span { white-space: nowrap; }
.defs { position: absolute; }

.tabbar { height: 27px; background: #cdcdcd; display: flex; align-items: center; flex: none; font-size: 11px; color: #222; }
.avatar { width: 20px; height: 20px; margin-left: 9px; }
.tabact { width: 13px; height: 13px; margin-left: 14px; }
.tab { height: 27px; display: flex; align-items: center; padding: 0 8px 0 9px; }
.tab .fi { width: 12px; height: 12px; margin-right: 9px; }
.tab .doc { height: 14px; }
.tab .cx { width: 9px; height: 9px; margin-left: auto; color: #333; }
.tab span { margin-top: -1px; }
.t1 { width: 199px; margin-left: 17px; background: linear-gradient(#8d8d8d, #8d8d8d) no-repeat 0 50% / 1px 17px; }
.t2 { width: 199px; background: linear-gradient(#8d8d8d, #8d8d8d) no-repeat 0 50% / 1px 17px; }
.t3 { width: 201px; background: #f7f7f7; border-radius: 7px 7px 0 0; padding-right: 9px; }
.tw { letter-spacing: -.65px; }
.tw2 { letter-spacing: -.65px; }
.plus { width: 12px; height: 12px; margin-left: 11px; }
.winbtns { display: flex; gap: 28px; margin-left: auto; margin-right: 15px; }
.winbtns svg { width: 10px; height: 10px; }

.edge { display: flex; height: 840px; flex: none; }
.edgemain { width: 1563px; }
.toolbar { height: 32px; display: flex; align-items: center; font-size: 12px; }
.back { width: 14px; height: 14px; margin-left: 16px; }
.reload { width: 14px; height: 14px; margin-left: 23px; }
.addr { width: 1257px; height: 26px; margin-left: 16px; border-radius: 13px; background: #fff; display: flex; align-items: center; padding: 0 14px 0 15px; }
.addr span { margin-top: -1px; }
.ie { width: 14px; height: 14px; }
.sep { width: 1px; height: 13px; background: #aaa; }
.s1 { margin-left: 9px; }
.warn { width: 14px; height: 13px; margin-left: 9px; }
.nsec { color: #6b6b6b; margin-left: 6px; width: 67px; letter-spacing: -.4px; }
.url { color: #222; margin-left: 10px; letter-spacing: -.7px; }
.star { width: 14px; height: 14px; margin-left: auto; }
.tbicons { display: flex; gap: 20.700px; margin-left: 15px; }
.tbicons svg { width: 16px; height: 16px; }

.infobar { height: 39px; margin-left: 3px; width: 1559px; background: #f8f8f8; border: 1px solid #ececec; border-radius: 6px; display: flex; align-items: center; font-size: 11px; color: #222; }
.imsg { margin-left: 12px; width: 391px; letter-spacing: -.36px; margin-top: -1px; }
.obtn { width: 134px; height: 27px; background: #0078d4; color: #fff; border-radius: 2px; display: flex; align-items: center; justify-content: center; padding-bottom: 1px; }
.obtn b { font-weight: 700; font-size: 10.500px; letter-spacing: -.56px; }
.learn { margin-left: auto; color: #1a6fc0; text-decoration: underline; margin-right: 17px; letter-spacing: -.55px; margin-top: -1px; }
.ix { width: 11px; height: 11px; margin-right: 13px; color: #333; }

.app { margin: 3px 0 0 4px; width: 1559px; font-family: "Liberation Sans", Arial, sans-serif; }
.nav { height: 32px; background: #2a2b30; border-bottom: 1px solid #43454a; display: flex; align-items: center; color: #a3a5ab; font-size: 12px; }
.gridi { width: 17px; height: 17px; margin-left: 18px; margin-top: -1px; }
.setting { margin-left: 17px; width: 114px; padding-top: 1px; letter-spacing: -.2px; }
.navtab { width: 115px; height: 31px; background: #515358; display: flex; align-items: center; color: #fff; padding: 0 6px 0 7px; }
.reel { width: 14px; height: 14px; }
.navtab span { margin-left: 7px; padding-top: 1px; letter-spacing: -.1px; }
.nx { width: 9px; height: 9px; color: #b5b6ba; margin-left: auto; }
.date { margin-left: auto; letter-spacing: -.14px; }
.navicons { display: flex; align-items: center; height: 31px; width: 129px; margin-left: 13px; border: solid #4c4e53; border-width: 0 1px; padding-left: 15px; }
.person { width: 13px; height: 13px; }
.exit { width: 26px; height: 14px; margin-left: 22px; margin-top: -2px; }
.qr { width: 14px; height: 15px; margin-left: 19px; margin-top: -3px; }
.mon { width: 16px; height: 16px; margin: 0 17px 0 13px; }
.title { height: 41px; background: #1b1e21; display: flex; align-items: center; color: #f2f2f2; font-size: 14px; padding-left: 16px; }
.title span { margin-left: 7px; padding-top: 1px; letter-spacing: -.4px; }
.mini { width: 10px; height: 2px; background: #a5a5a5; margin-left: auto; margin-top: 4px; }
.tx { width: 12px; height: 12px; color: #c0c0c0; margin: 0 8px 0 6px; }

.body { display: flex; height: 689px; }
.left { width: 1301px; background: #2a2c30; }
.videos { display: grid; grid-template-columns: 651px 650px; grid-template-rows: 266px 264px; }
.cell { background: #030303; border: 1px solid #77797c; border-width: 1px 1px 0 0; display: flex; flex-direction: column; }
.cell.sel { border: 1px solid #35c535; }
.sel .cbody { padding-right: 2px; }
.chead { height: 14px; background: #414141; display: flex; align-items: center; justify-content: flex-end; padding-right: 2px; flex: none; }
.chead svg { width: 42px; height: 12px; }
.cbody { flex: 1; display: flex; align-items: center; justify-content: center; }
.cbody svg { width: 68px; height: 68px; }
.controls { height: 43px; background: #4c4f53; border-top: 1px solid #77797c; display: flex; align-items: center; }
.play { width: 226px; height: 20px; margin: -2px 0 0 10px; }
.vsep { width: 1px; height: 21px; background: #1f2124; margin-top: 1px; }
.play + .vsep { margin-left: 16px; }
.spk { width: 22px; height: 20px; margin: -1px 0 0 5px; }
.vol { display: flex; align-items: center; margin: -1px 0 0 7px; width: 100px; }
.fill { width: 43px; height: 3px; background: #1f90dc; }
.knob { width: 18px; height: 18px; }
.rest { width: 39px; height: 2px; background: #3a3d40; }
.vol + .vsep { margin-left: 12px; }
.trio { width: 74px; height: 18px; margin: 4px 0 0 6px; }
.far { margin-left: auto; }
.clip { display: flex; margin-left: 8px; width: 246px; height: 33px; border: 1px solid #686b70; margin-top: -1px; font-family: "Noto Sans", "Open Sans", sans-serif; }
.cl { background: #2b2d31; border-right: 1px solid #686b70; display: flex; align-items: center; justify-content: center; color: #5c5f64; font-size: 14px; }
.sc { width: 33px; background: #303338; }
.sc svg { width: 18px; height: 18px; }
.tm { width: 75px; letter-spacing: .6px; }
.ds { width: 26px; color: #aaa; font-size: 17px; }
.sv { flex: 1; background: #4a4d51; border: 0; padding-right: 5px; }
.sv svg { width: 16px; height: 16px; }
.timeline { height: 65px; position: relative; padding-left: 8px; }
.ruler { height: 12px; display: grid; grid-template-columns: repeat(24, 53.540px) 0; font-size: 6.500px; color: #b5b7bb; line-height: 9px; }
.ruler span { margin-left: -1px; }
.ruler .last { margin-left: -7px; }
.track { width: 1285px; height: 54px; }
.stamp { position: absolute; left: 912px; top: 12px; width: 43px; height: 13px; background: rgba(170, 170, 200, .35); color: #1616d8; font-size: 10.500px; line-height: 13px; padding-left: 2px; letter-spacing: -.28px; }
.scroll { height: 11px; background: #4a4d51; display: flex; align-items: center; }
.scroll svg { width: 12px; height: 10px; }
.scroll .rt { margin-left: auto; margin-right: 1px; }
.legend { height: 40px; display: flex; align-items: center; font-size: 10.600px; letter-spacing: -.3px; color: #b3b5b9; padding-left: 8px; }
.stop { width: 115px; font-size: 12px; padding-top: 1px; letter-spacing: -.1px; }
.lg { display: flex; align-items: center; width: 65px; padding-bottom: 1px; }
.lg span { margin: -1px 0 0 8px; }
.sy { width: 75px; }
.al { width: 55px; }
.sy span, .al span { margin-left: 9px; }
.cb { width: 17px; height: 17px; border: 1px solid #55585c; }
.cb.blue { border-color: #1f86cc; color: #1f90dc; background: #26292d; }
.cb.green { background: #3bcf7d; border-color: #2fae68; color: #17603a; }
.cb.red { background: #fb4a4a; border-color: #d44; color: #8c1f1f; }
.cb.yel { background: #e6d052; border-color: #b9a53c; color: #6d601c; }
.cb.sky { background: #34a5ee; border-color: #2b8fd0; color: #154f7a; }
.zoomer { display: flex; align-items: center; margin-left: auto; margin-right: 9px; }
.zi { width: 18px; height: 18px; margin-top: -1px; }
.zoomer .knob { margin-left: 9px; margin-top: 1px; }
.zl { width: 129px; height: 2px; background: #404347; margin-right: 10px; margin-top: 1px; }

.side { width: 258px; background: #3a3c40; border-left: 2px solid #2a2c30; padding: 13px 16px 0 16px; }
.record { height: 27px; border: 1px solid #4c4f53; display: flex; align-items: center; justify-content: space-between; padding: 0 7px 0 5px; color: #fff; font-size: 13.500px; letter-spacing: -.1px; }
.record svg { width: 10px; height: 6px; }
.rule { height: 1px; background: #222427; margin-top: 10px; }
.cal { margin-top: 9px; border: 1px solid #2b2d30; height: 195px; }
.calhead { height: 29px; background: #4a4d50; display: flex; align-items: center; color: #f4f4f4; font-size: 13px; letter-spacing: -.2px; padding-left: 85px; }
.calhead svg { width: 10px; height: 6px; margin-left: 26px; }
.days { display: grid; grid-template-columns: repeat(7, 29.300px); grid-template-rows: 22px repeat(6, 20.800px); padding: 9px 0 0 8.500px; font-size: 11.500px; letter-spacing: -.2px; color: #b0b2b6; text-align: center; line-height: 21px; }
.days b { color: #94969a; }
.days i { color: #55585c; }
.days .today { background: #0a99fb; color: #fff; position: relative; }
.today::after { content: ""; position: absolute; left: 13px; bottom: 1px; width: 4px; height: 4px; border-radius: 50%; background: #fff; }
.cams { margin-top: 9px; border: 1px solid #2b2d30; height: 338px; color: #f0f0f0; font-size: 12px; letter-spacing: -.2px; }
.camhead { height: 34px; background: #4a4d50; border-bottom: 1px solid #2b2d30; display: flex; align-items: center; padding: 0 0 1px 3px; margin-bottom: 6px; }
.camhead span, .cam span { margin-left: 8.500px; }
.cam span { margin-top: -1px; }
.dark { background: #292b2f; }
.cam { display: flex; height: 29.200px; padding: 0 8px 0 3px; align-items: flex-start; }
.cam b { margin-left: auto; width: 17px; height: 17px; border: 1px solid #686b70; background: #2f3236; font-size: 10.500px; line-height: 15px; text-align: center; }
.listbtn { width: 55px; height: 33px; margin: 38px 0 0 auto; border: 1px solid #686b70; background: #303338; display: flex; align-items: center; justify-content: center; }
.listbtn svg { width: 20px; height: 16px; }

.sidebar { width: 37px; display: flex; flex-direction: column; align-items: center; border-left: 1px solid #ececec; padding-top: 5px; padding-right: 1px; }
.sidebar svg { width: 16px; height: 16px; margin-bottom: 17.500px; }
.sidebar .cop { width: 20px; height: 20px; margin-bottom: 16px; }
.hr { width: 24px; height: 1px; background: #bbb; }
.sidebar .sp { width: 10px; height: 10px; margin: 22px 0 0; }
.low { margin-top: auto; }
.sidebar .sg { margin: 11px 0 11px; }

.taskbar { height: 33px; flex: none; display: flex; color: #fff; background: linear-gradient(90deg, #36281d 0, #38292a 280px, #35282c 470px, #3a3228 620px, #332b24 830px, #42261f 905px, #482c38 975px, #42292e 1035px, #4c2a42 1085px, #40282e 1135px, #473c3f 1215px, #3e3b2e 1300px, #3d3626 1400px, #38351f 1600px); }
.start { width: 40px; display: flex; align-items: center; justify-content: center; }
.start svg { width: 14px; height: 14px; }
.search { width: 240px; background: #f1f1f1; display: flex; align-items: center; color: #333; font-size: 13px; }
.mag { width: 14px; height: 14px; margin-left: 10px; }
.search span { margin-left: 9px; letter-spacing: -.7px; margin-top: -1px; }
.bags { width: 52px; height: 29px; margin-left: auto; margin-right: 8px; }
.apps { display: flex; padding-left: .5px; }
.ap { width: 40.900px; display: flex; align-items: center; justify-content: center; }
.ap svg { width: 22px; height: 22px; }
.on { background: linear-gradient(#76a9d6, #76a9d6) no-repeat 50% 100% / 33px 2px; }
.cur { background: linear-gradient(#76a9d6, #76a9d6) no-repeat 50% 100% / 40px 2px, #60585a; }
.tray { margin-left: auto; display: flex; align-items: center; font-size: 12px; }
.wx { width: 22px; height: 20px; }
.temp { margin-left: 4px; width: 32px; letter-spacing: -.4px; }
.smoke { width: 55px; letter-spacing: -.4px; }
.chev { width: 11px; height: 8px; }
.net { width: 14px; height: 12px; margin-left: 8px; }
.mute { width: 13px; height: 10px; margin-left: 6px; }
.meet { width: 12px; height: 14px; margin-left: 9px; }
.two { display: flex; flex-direction: column; align-items: center; font-size: 10.500px; line-height: 14.500px; letter-spacing: -.45px; }
.lang { width: 20px; margin-left: 8px; }
.clock { width: 46px; margin-left: 10px; }
.notif { display: flex; position: relative; width: 24px; margin-left: 13px; }
.notif svg { width: 14px; height: 14px; }
.notif span { position: absolute; left: 4px; top: 4px; width: 17px; height: 14px; border-radius: 7px; background: #4b4a44; font-size: 10.500px; line-height: 13px; text-align: center; font-weight: 600; }
.peek { width: 1px; height: 33px; background: #8a8878; margin: 0 3px 0 6px; }
```
